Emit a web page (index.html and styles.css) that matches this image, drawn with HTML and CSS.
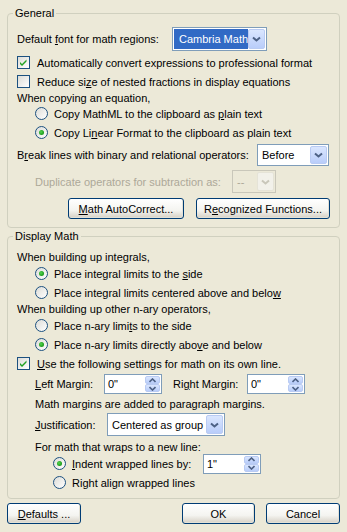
FILE: index.html
```html
<!DOCTYPE html>
<html lang="en">
<head>
    <meta charset="UTF-8">
    <title>Equation Options</title>
    <link rel="stylesheet" href="styles.css">
</head>
<body>
    <div class="dialog">
        <fieldset class="group general">
            <legend>General</legend>

            <div class="row font-row">
                <span class="label font-label">Default <u>f</u>ont for math regions:</span>
                <div class="combo selected font-combo">
                    <span class="value">Cambria Math</span>
                    <span class="drop"><svg width="9" height="6" viewBox="0 0 9 6"><path d="M1 1.5 L4.5 4.5 L8 1.5" fill="none" stroke="#4D6185" stroke-width="2"/></svg></span>
                </div>
            </div>

            <div class="row check-row first-check">
                <span class="check on"><svg width="7" height="7" viewBox="0 0 7 7"><path d="M0 3 L2 5 L6.5 0.5 L6.5 2.5 L2 7 L0 5 Z" fill="#21A121"/></svg></span>
                <span>Automatically convert expressions to professional format</span>
            </div>
            <div class="row check-row">
                <span class="check"></span>
                <span>Reduce si<u>z</u>e of nested fractions in display equations</span>
            </div>

            <div class="row text-row">When copying an equation,</div>
            <div class="row radio-row indent">
                <span class="radio"></span>
                <span>Copy MathML to the clipboard as <u>p</u>lain text</span>
            </div>
            <div class="row radio-row indent">
                <span class="radio on"></span>
                <span>Copy Li<u>n</u>ear Format to the clipboard as plain text</span>
            </div>

            <div class="row break-row">
                <span class="label break-label">B<u>r</u>eak lines with binary and relational operators:</span>
                <div class="combo break-combo">
                    <span class="value">Before</span>
                    <span class="drop"><svg width="9" height="6" viewBox="0 0 9 6"><path d="M1 1.5 L4.5 4.5 L8 1.5" fill="none" stroke="#4D6185" stroke-width="2"/></svg></span>
                </div>
            </div>

            <div class="row dup-row indent">
                <span class="label dup-label disabled">Duplicate operators for subtraction as:</span>
                <div class="combo off dup-combo">
                    <span class="value">--</span>
                    <span class="drop"><svg width="9" height="6" viewBox="0 0 9 6"><path d="M1 1.5 L4.5 4.5 L8 1.5" fill="none" stroke="#C9C7BA" stroke-width="2"/></svg></span>
                </div>
            </div>

            <div class="row button-row">
                <button class="btn autocorrect-btn"><u>M</u>ath AutoCorrect...</button>
                <button class="btn functions-btn">R<u>e</u>cognized Functions...</button>
            </div>
        </fieldset>

        <fieldset class="group display">
            <legend>Display Math</legend>

            <div class="row text-row first-text">When building up integrals,</div>
            <div class="row radio-row indent">
                <span class="radio on"></span>
                <span>Place integral limits to the <u>s</u>ide</span>
            </div>
            <div class="row radio-row indent">
                <span class="radio"></span>
                <span>Place integral limits centered above and belo<u>w</u></span>
            </div>

            <div class="row text-row">When building up other n-ary operators,</div>
            <div class="row radio-row indent">
                <span class="radio"></span>
                <span>Place n-ary limi<u>t</u>s to the side</span>
            </div>
            <div class="row radio-row indent">
                <span class="radio on"></span>
                <span>Place n-ary limits directly abo<u>v</u>e and below</span>
            </div>

            <div class="row check-row">
                <span class="check on"><svg width="7" height="7" viewBox="0 0 7 7"><path d="M0 3 L2 5 L6.5 0.5 L6.5 2.5 L2 7 L0 5 Z" fill="#21A121"/></svg></span>
                <span><u>U</u>se the following settings for math on its own line.</span>
            </div>

            <div class="row margin-row indent">
                <span class="label left-label"><u>L</u>eft Margin:</span>
                <div class="spin">
                    <span class="value">0"</span>
                    <span class="arrows">
                        <span class="arrow"><svg width="7" height="5" viewBox="0 0 7 5"><path d="M0.5 4 L3.5 1 L6.5 4" fill="none" stroke="#4D6185" stroke-width="1.6"/></svg></span>
                        <span class="arrow"><svg width="7" height="5" viewBox="0 0 7 5"><path d="M0.5 1 L3.5 4 L6.5 1" fill="none" stroke="#4D6185" stroke-width="1.6"/></svg></span>
                    </span>
                </div>
                <span class="label right-label">Ri<u>g</u>ht Margin:</span>
                <div class="spin">
                    <span class="value">0"</span>
                    <span class="arrows">
                        <span class="arrow"><svg width="7" height="5" viewBox="0 0 7 5"><path d="M0.5 4 L3.5 1 L6.5 4" fill="none" stroke="#4D6185" stroke-width="1.6"/></svg></span>
                        <span class="arrow"><svg width="7" height="5" viewBox="0 0 7 5"><path d="M0.5 1 L3.5 4 L6.5 1" fill="none" stroke="#4D6185" stroke-width="1.6"/></svg></span>
                    </span>
                </div>
            </div>

            <div class="row text-row note-row indent">Math margins are added to paragraph margins.</div>

            <div class="row just-row indent">
                <span class="label just-label"><u>J</u>ustification:</span>
                <div class="combo just-combo">
                    <span class="value">Centered as group</span>
                    <span class="drop"><svg width="9" height="6" viewBox="0 0 9 6"><path d="M1 1.5 L4.5 4.5 L8 1.5" fill="none" stroke="#4D6185" stroke-width="2"/></svg></span>
                </div>
            </div>

            <div class="row text-row wrap-row indent">For math that wraps to a new line:</div>
            <div class="row radio-row indent-2">
                <span class="radio on"></span>
                <span class="label indent-label"><u>I</u>ndent wrapped lines by:</span>
                <div class="spin">
                    <span class="value">1"</span>
                    <span class="arrows">
                        <span class="arrow"><svg width="7" height="5" viewBox="0 0 7 5"><path d="M0.5 4 L3.5 1 L6.5 4" fill="none" stroke="#4D6185" stroke-width="1.6"/></svg></span>
                        <span class="arrow"><svg width="7" height="5" viewBox="0 0 7 5"><path d="M0.5 1 L3.5 4 L6.5 1" fill="none" stroke="#4D6185" stroke-width="1.6"/></svg></span>
                    </span>
                </div>
            </div>
            <div class="row radio-row indent-2">
                <span class="radio"></span>
                <span>Ri<u>g</u>ht align wrapped lines</span>
            </div>
        </fieldset>

        <div class="footer">
            <button class="btn defaults-btn"><u>D</u>efaults ...</button>
            <button class="btn ok-btn">OK</button>
            <button class="btn cancel-btn">Cancel</button>
        </div>
    </div>
</body>
</html>
```

FILE: styles.css
```css
/* Reset */
* {
    margin: 0;
    padding: 0;
    box-sizing: border-box;
}

body {
    background: #ECE9D8;
    font-family: 'Liberation Sans', Arial, sans-serif;
    font-size: 11px;
    color: #000;
}

u {
    text-decoration-thickness: 1px;
    text-underline-offset: 1px;
}

/* Dialog */
.dialog {
    width: 347px;
    height: 532px;
    padding: 7px;
    display: flex;
    flex-direction: column;
}

/* Group boxes */
.group {
    border: 1px solid #D0D0BF;
    border-radius: 4px;
    padding: 0 8px 8px 9px;
    display: flex;
    flex-direction: column;
    min-width: 0;
}

.group legend {
    line-height: 13px;
    padding: 0 2px;
    margin-left: -4px;
}

.display {
    margin-top: 2px;
    padding-bottom: 6px;
}

/* Rows */
.row {
    display: flex;
    align-items: center;
    white-space: nowrap;
}

.indent {
    padding-left: 18px;
}

.indent-2 {
    padding-left: 36px;
}

.text-row {
    height: 13px;
}

.display .text-row {
    height: 14px;
}

.first-text {
    margin-top: 7px;
}

.check-row, .radio-row {
    height: 19px;
}

.first-check {
    margin-top: 2px;
}

.label {
    flex: none;
}

.disabled {
    color: #ACA899;
}

/* Checkbox */
.check {
    width: 13px;
    height: 13px;
    margin-right: 7px;
    border: 1px solid #1C5180;
    background: linear-gradient(135deg, #DCDCD7, #FFFFFF);
    display: flex;
    align-items: center;
    justify-content: center;
    flex: none;
}

/* Radio */
.radio {
    width: 13px;
    height: 13px;
    margin-right: 6px;
    border: 1px solid #1C5180;
    border-radius: 50%;
    background: linear-gradient(135deg, #DCDCD7, #FFFFFF);
    position: relative;
    flex: none;
}

.radio.on::after {
    content: '';
    position: absolute;
    left: 3px;
    top: 3px;
    width: 5px;
    height: 5px;
    border-radius: 50%;
    background: radial-gradient(circle at 40% 40%, #55D551, #21A121 60%, #1A8A1A);
}

/* Combo boxes */
.combo {
    height: 23px;
    border: 1px solid #7F9DB9;
    background: #fff;
    display: flex;
    align-items: center;
    padding: 1px;
    flex: none;
}

.combo .value {
    flex: 1;
    padding-left: 3px;
    height: 100%;
    display: flex;
    align-items: center;
}

.combo .drop {
    width: 17px;
    height: 100%;
    border: 1px solid #B9CBF3;
    border-radius: 2px;
    background: linear-gradient(#DAE6FE, #B9CDFA);
    display: flex;
    align-items: center;
    justify-content: center;
}

.combo.selected .value {
    background: #316AC5;
    color: #fff;
    padding-left: 5px;
}

.combo.off {
    border-color: #C9C7BA;
    background: #ECE9D8;
}

.combo.off .value {
    color: #ACA899;
}

.combo.off .drop {
    border-color: #E5E3D7;
    background: #F2F1EA;
}

.font-row {
    margin-top: 7px;
    height: 24px;
}

.font-label {
    width: 155px;
}

.font-combo {
    width: 95px;
    height: 24px;
}

.break-row {
    margin-top: 2px;
    height: 22px;
}

.break-label {
    width: 240px;
}

.break-combo {
    width: 72px;
    height: 22px;
}

.dup-row {
    margin-top: 4px;
    height: 23px;
}

.dup-label {
    width: 197px;
}

.dup-combo {
    width: 44px;
}

.just-row {
    margin-top: 2px;
    height: 23px;
}

.just-label {
    width: 72px;
}

.just-combo {
    width: 118px;
}

/* Spin boxes */
.spin {
    width: 58px;
    height: 20px;
    border: 1px solid #7F9DB9;
    background: #fff;
    display: flex;
    padding: 1px;
    flex: none;
}

.spin .value {
    flex: 1;
    padding-left: 2px;
    display: flex;
    align-items: center;
}

.spin .arrows {
    width: 15px;
    display: flex;
    flex-direction: column;
}

.arrow {
    flex: 1;
    border: 1px solid #B9CBF3;
    border-radius: 2px;
    background: linear-gradient(#DAE6FE, #B9CDFA);
    display: flex;
    align-items: center;
    justify-content: center;
}

.margin-row {
    margin-top: 1px;
    height: 20px;
}

.left-label {
    width: 69px;
}

.right-label {
    width: 74px;
    margin-left: 11px;
}

.note-row {
    margin-top: 3px;
}

.wrap-row {
    margin-top: 4px;
}

.indent-label {
    width: 131px;
}

/* Buttons */
.btn {
    font-family: inherit;
    font-size: 11px;
    color: #000;
    height: 21px;
    border: 1px solid #003C74;
    border-radius: 3px;
    background: linear-gradient(#FFFFFF, #F4F4F0 60%, #D6D0C5);
    box-shadow: inset -1px -1px 0 #E3E1D6;
}

.button-row {
    margin-top: 5px;
    padding-left: 51px;
    gap: 12px;
}

.autocorrect-btn {
    width: 116px;
}

.functions-btn {
    width: 134px;
}

.footer {
    margin-top: 4px;
    display: flex;
}

.defaults-btn {
    width: 74px;
}

.ok-btn {
    width: 73px;
    margin-left: auto;
}

.cancel-btn {
    width: 74px;
    margin-left: 11px;
}
```
